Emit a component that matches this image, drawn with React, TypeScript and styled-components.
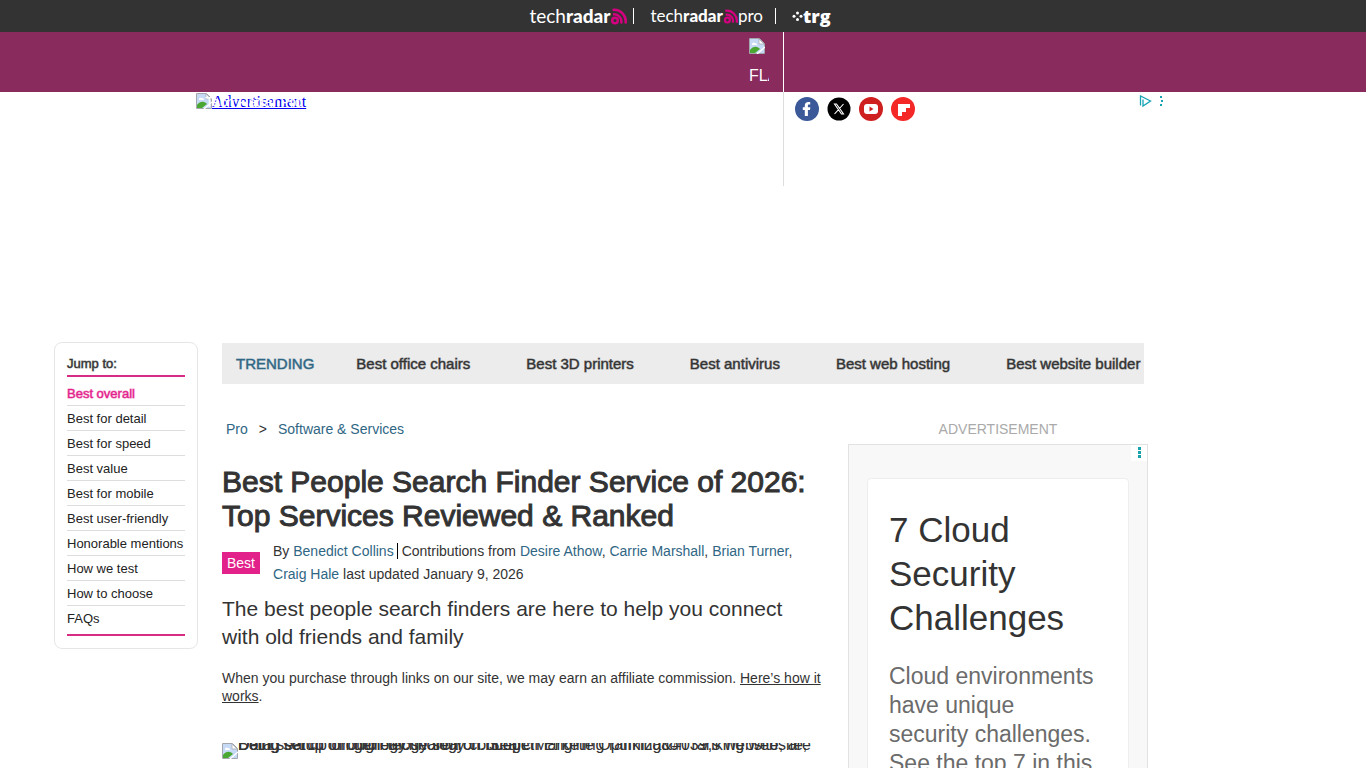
import React from "react";
import styled, { createGlobalStyle } from "styled-components";

const Global = createGlobalStyle`
  * { box-sizing: border-box; }
  html { scrollbar-width: none; }
  body {
    margin: 0;
    background: #fff;
    color: #333;
    font-family: "Liberation Sans", Arial, sans-serif;
    font-size: 14px;
  }
  a { color: inherit; text-decoration: none; }
`;

const BrandBar = styled.nav`
  display: flex;
  justify-content: center;
  align-items: center;
  height: 32px;
  padding-right: 6px;
  background: #333;
  color: #fff;
`;

const BrandLink = styled.a<{ $size: number; $gap?: number }>`
  display: flex;
  align-items: center;
  height: 16px;
  padding-right: ${(p) => p.$gap ?? 0}px;
  margin-right: ${(p) => (p.$gap ? 16 : 0)}px;
  border-right: ${(p) => (p.$gap ? "1px solid #fff" : "0")};
  font-family: Lato, sans-serif;
  font-size: ${(p) => p.$size}px;
  line-height: 16px;
  b { font-weight: 900; }
  svg { flex: none; }
`;

const Trg = styled.b`
  font-family: "Open Sans", sans-serif;
  line-height: 12px;
`;

const Band = styled.div`
  height: 60px;
  background: #8a2b5d;
`;

const Frame = styled.div`
  display: grid;
  grid-template-columns: 588px 1fr;
  width: 100%;
  max-width: 974px;
  margin: 0 auto;
`;

const FlagCell = styled.div`
  display: flex;
  justify-content: flex-end;
  height: 60px;
  padding: 6px 14px 0 0;
  border-right: 1px solid #fff;
`;

const Flag = styled.span`
  display: block;
  width: 20px;
  overflow: hidden;
  color: #fff;
  font-size: 16px;
  line-height: 28px;
  svg { display: block; margin-bottom: 8px; }
`;

const Leaderboard = styled.div`
  min-height: 250px;
`;

const BannerCell = styled.div`
  position: relative;
  height: 94px;
  padding-top: 1px;
  border-right: 1px solid #ddd;
`;

const BannerLink = styled.a`
  display: inline-flex;
  color: #0000ee;
  text-decoration: underline;
  font: 16px/18px "Liberation Serif", serif;
`;

const HiddenMenuLabel = styled.span`
  position: absolute;
  left: 9px;
  top: 0;
  color: #fff;
  font-size: 14px;
  line-height: 20px;
`;

const SocialCell = styled.div`
  display: flex;
  justify-content: space-between;
  align-items: flex-start;
  padding: 3px 4px 0 11px;
`;

const SocialList = styled.div`
  display: flex;
  gap: 8px;
  padding-top: 2px;
  svg { display: block; }
`;

const Columns = styled.div`
  display: grid;
  grid-template-columns: minmax(168px, 1fr) minmax(0, 922px) minmax(0, 1fr);
  align-items: start;
`;

const JumpCard = styled.nav`
  justify-self: end;
  width: 144px;
  margin-right: 24px;
  padding: 12px;
  border: 1px solid #e6e6e6;
  border-radius: 8px;
  font-size: 13px;
`;

const JumpTitle = styled.div`
  color: #333;
  line-height: 18px;
  padding-bottom: 2px;
  -webkit-text-stroke: 1px #33333388;
`;

const JumpList = styled.ul`
  list-style: none;
  margin: 0;
  padding: 4px 0 3px;
  border: solid #d82b84;
  border-width: 2px 0;
`;

const JumpItem = styled.li<{ $active?: boolean }>`
  height: 25px;
  line-height: 25px;
  white-space: nowrap;
  border-bottom: 1px solid #ddd;
  color: ${(p) => (p.$active ? "#e3218b" : "#222")};
  -webkit-text-stroke: ${(p) => (p.$active ? "1px #e3218b88" : "0")};
  &:last-child { border-bottom: 0; }
`;

const Main = styled.main`
  padding-top: 1px;
`;

const Trending = styled.nav`
  display: flex;
  align-items: center;
  height: 41px;
  padding-left: 14px;
  overflow: hidden;
  background: #ececec;
  font-size: 15px;
  white-space: nowrap;
`;

const TrendLabel = styled.span`
  margin-right: 42px;
  color: #2f6684;
  -webkit-text-stroke: 1px #2f668488;
`;

const TrendLink = styled.a`
  margin-right: 56px;
  -webkit-text-stroke: 1px #33333388;
`;

const Body = styled.div`
  display: grid;
  grid-template-columns: minmax(0, 600px) 300px;
  justify-content: space-between;
  margin-right: -4px;
  padding-top: 35px;
`;

const Crumbs = styled.nav`
  display: flex;
  gap: 11px;
  padding-left: 4px;
  line-height: 20px;
  color: #2f6684;
  span { color: #333; }
`;

const Title = styled.h1`
  margin: 26px 0 7px;
  font-size: 30px;
  font-weight: 400;
  line-height: 34px;
  -webkit-text-stroke: 1px #333;
`;

const Byline = styled.div`
  display: flex;
  align-items: center;
  gap: 13px;
  line-height: 23px;
  p { margin: 0; }
  a { color: #2f6684; }
`;

const Tag = styled.a`
  && { color: #fff; }
  padding: 0 5px;
  line-height: 22px;
  background: #e3218b;
`;

const Author = styled.span`
  margin-right: 4px;
  padding-right: 3px;
  border-right: 1px solid #000;
`;

const Standfirst = styled.p`
  margin: 9px 0 18px;
  font-size: 21px;
  line-height: 28px;
`;

const Disclosure = styled.p`
  margin: 0 0 38px;
  line-height: 18px;
  a { text-decoration: underline; }
`;

const Hero = styled.figure`
  height: 338px;
  margin: 0;
  overflow: hidden;
  font-size: 16px;
  line-height: 0;
  svg { float: left; }
  p { margin: 0; padding-top: 2px; white-space: pre; }
`;

const AdLabel = styled.div`
  margin-bottom: 5px;
  line-height: 20px;
  text-align: center;
  color: #aaa;
`;

const AdBox = styled.section`
  position: relative;
  min-height: 600px;
  padding: 33px 18px;
  border: 1px solid #e2e2e2;
  background: #f8f8f8;
`;

const AdMenu = styled.button`
  position: absolute;
  top: 0;
  right: 0;
  width: 16px;
  height: 16px;
  padding: 0;
  border: 0;
  background: #fff;
  svg { display: block; margin: auto; }
`;

const AdCard = styled.div`
  min-height: 530px;
  padding: 29px 31px 29px 21px;
  border: 1px solid #eee;
  border-radius: 4px;
  background: #fff;
  h2 {
    margin: 0 0 22px;
    font-size: 35px;
    font-weight: 400;
    line-height: 44px;
  }
  p {
    margin: 0;
    font-size: 23px;
    line-height: 29px;
    color: #6b6b6b;
  }
`;

const BrokenImage = () => (
  <svg width="16" height="16" viewBox="0 0 16 16" aria-hidden="true">
    <path d="M1 1h9l5 5v9H1z" fill="#c6d9f5" />
    <path d="M10 1v5h5z" fill="#fff" stroke="#a3a7ad" strokeWidth=".7" />
    <path d="M3 6a2 2 0 0 1 3-1 2 2 0 0 1 2 2H3z" fill="#fff" />
    <path d="M1 15v-3c3-4 6-4 9-2l1 1-5 4z" fill="#4aa832" />
    <path d="M.5 15.500V.5h10l5 5v10z" fill="none" stroke="#a3a7ad" />
    <path d="M8 16l8-7" stroke="#fff" strokeWidth="1.300" />
  </svg>
);

const Waves = ({ size }: { size: number }) => (
  <svg width={size} height={size} viewBox="0 0 17 17" fill="none" stroke="#d5007f" strokeWidth="2.500" aria-hidden="true">
    <circle cx="5" cy="12.500" r="2.800" />
    <path d="M3 6.500a7 7 0 0 1 8 9M2.500 2A11.500 11.500 0 0 1 15.500 15.500" />
  </svg>
);

const Dots = () => (
  <svg width="4" height="16" viewBox="0 0 4 16" fill="#16a3ad" aria-hidden="true">
    <path d="M1 2h3v3H1zM1 6h3v3H1zM1 10h3v3H1z" />
  </svg>
);

const jumps = [
  "Best overall", "Best for detail", "Best for speed", "Best value", "Best for mobile",
  "Best user-friendly", "Honorable mentions", "How we test", "How to choose", "FAQs",
];
const trends = ["Best office chairs", "Best 3D printers", "Best antivirus", "Best web hosting", "Best website builder"];

export default function App() {
  return (
    <>
      <Global />
      <BrandBar>
        <BrandLink href="#" $size={19} $gap={6}>tech<b>radar</b><Waves size={17} /></BrandLink>
        <BrandLink href="#" $size={17} $gap={12}>tech<b>radar</b><Waves size={15} />pro</BrandLink>
        <BrandLink href="#" $size={18}>
          <svg width="11" height="12" viewBox="0 0 11 12" fill="#fff" aria-hidden="true">
            <circle cx="5.500" cy="3" r="1.500" /><circle cx="5.500" cy="9.500" r="1.500" />
            <circle cx="2" cy="6.200" r="1.500" /><circle cx="9" cy="6.200" r="1.500" />
          </svg>
          <Trg>trg</Trg>
        </BrandLink>
      </BrandBar>
      <header>
        <Band>
          <Frame>
            <FlagCell><Flag><BrokenImage />FLAG</Flag></FlagCell>
          </Frame>
        </Band>
        <Leaderboard>
          <Frame>
            <BannerCell>
              <BannerLink href="#"><BrokenImage />Advertisement</BannerLink>
              <HiddenMenuLabel>Tech Radar Pro</HiddenMenuLabel>
            </BannerCell>
            <SocialCell>
              <SocialList>
                <a href="#" aria-label="Facebook">
                  <svg width="24" height="24" viewBox="0 0 24 24"><circle cx="12" cy="12" r="12" fill="#3b5998" /><path d="M9.800 19v-6H7.800v-2.800h2V8.600c0-2.400 1.300-3.600 3.600-3.600l1.800.1v2.500H14c-.9 0-1.100.5-1.100 1.200v1.400h2.400l-.3 2.800h-2.100V19z" fill="#fff" /></svg>
                </a>
                <a href="#" aria-label="X">
                  <svg width="24" height="24" viewBox="0 0 24 24"><circle cx="12" cy="12" r="11.500" fill="#000" /><path d="M7.500 7h2l7 10h-2zM16.500 7l-4 4.500M11.500 12.700L7.500 17" fill="none" stroke="#fff" strokeWidth="1.100" /></svg>
                </a>
                <a href="#" aria-label="YouTube">
                  <svg width="24" height="24" viewBox="0 0 24 24"><circle cx="12" cy="12" r="12" fill="#cd201f" /><rect x="5" y="7" width="14" height="10" rx="3" fill="#fff" /><path d="M10.500 9.500v5l4-2.500z" fill="#cd201f" /></svg>
                </a>
                <a href="#" aria-label="Flipboard">
                  <svg width="24" height="24" viewBox="0 0 24 24"><circle cx="12" cy="12" r="12" fill="#f52828" /><path d="M7 7h12v4h-4v4h-4v4H7z" fill="#fff" /></svg>
                </a>
              </SocialList>
              <svg width="28" height="13" viewBox="0 0 28 13" aria-label="Ad choices">
                <path d="M2.500 10.500V1L12.500 6 5 11V4.500" fill="none" stroke="#16a3b5" strokeWidth="1.300" />
                <path d="M22 1h2v2h-2zM23 5h2v2h-2zM22 9h2v2h-2z" fill="#16a3b5" />
              </svg>
            </SocialCell>
          </Frame>
        </Leaderboard>
      </header>
      <Columns>
        <JumpCard>
          <JumpTitle>Jump to:</JumpTitle>
          <JumpList>
            {jumps.map((j, i) => (
              <JumpItem key={j} $active={i === 0}><a href="#">{j}</a></JumpItem>
            ))}
          </JumpList>
        </JumpCard>
        <Main>
          <Trending>
            <TrendLabel>TRENDING</TrendLabel>
            {trends.map((t) => <TrendLink key={t} href="#">{t}</TrendLink>)}
          </Trending>
          <Body>
            <article>
              <Crumbs><a href="#">Pro</a><span>&gt;</span><a href="#">Software &amp; Services</a></Crumbs>
              <Title>Best People Search Finder Service of 2026: Top Services Reviewed &amp; Ranked</Title>
              <Byline>
                <Tag href="#">Best</Tag>
                <p>
                  <Author>By <a href="#">Benedict Collins</a></Author>
                  Contributions from <a href="#">Desire Athow</a>, <a href="#">Carrie Marshall</a>, <a href="#">Brian Turner</a>, <a href="#">Craig Hale</a> last updated January 9, 2026
                </p>
              </Byline>
              <Standfirst>The best people search finders are here to help you connect with old friends and family</Standfirst>
              <Disclosure>
                When you purchase through links on our site, we may earn an affiliate commission. <a href="#">Here’s how it works</a>.
              </Disclosure>
              <Hero>
                <BrokenImage />
                <p>
                  {"Being set up on genealogy search. Search Engine Optimization ranking website,\nData search through technology concept. Marketing ranking&#039;s website, are\nDoing setup of ontology search on budget"}
                </p>
              </Hero>
            </article>
            <aside>
              <AdLabel>ADVERTISEMENT</AdLabel>
              <AdBox>
                <AdMenu aria-label="Ad options"><Dots /></AdMenu>
                <AdCard>
                  <h2>7 Cloud Security Challenges</h2>
                  <p>Cloud environments have unique security challenges. See the top 7 in this infographic.</p>
                </AdCard>
              </AdBox>
            </aside>
          </Body>
        </Main>
      </Columns>
    </>
  );
}
